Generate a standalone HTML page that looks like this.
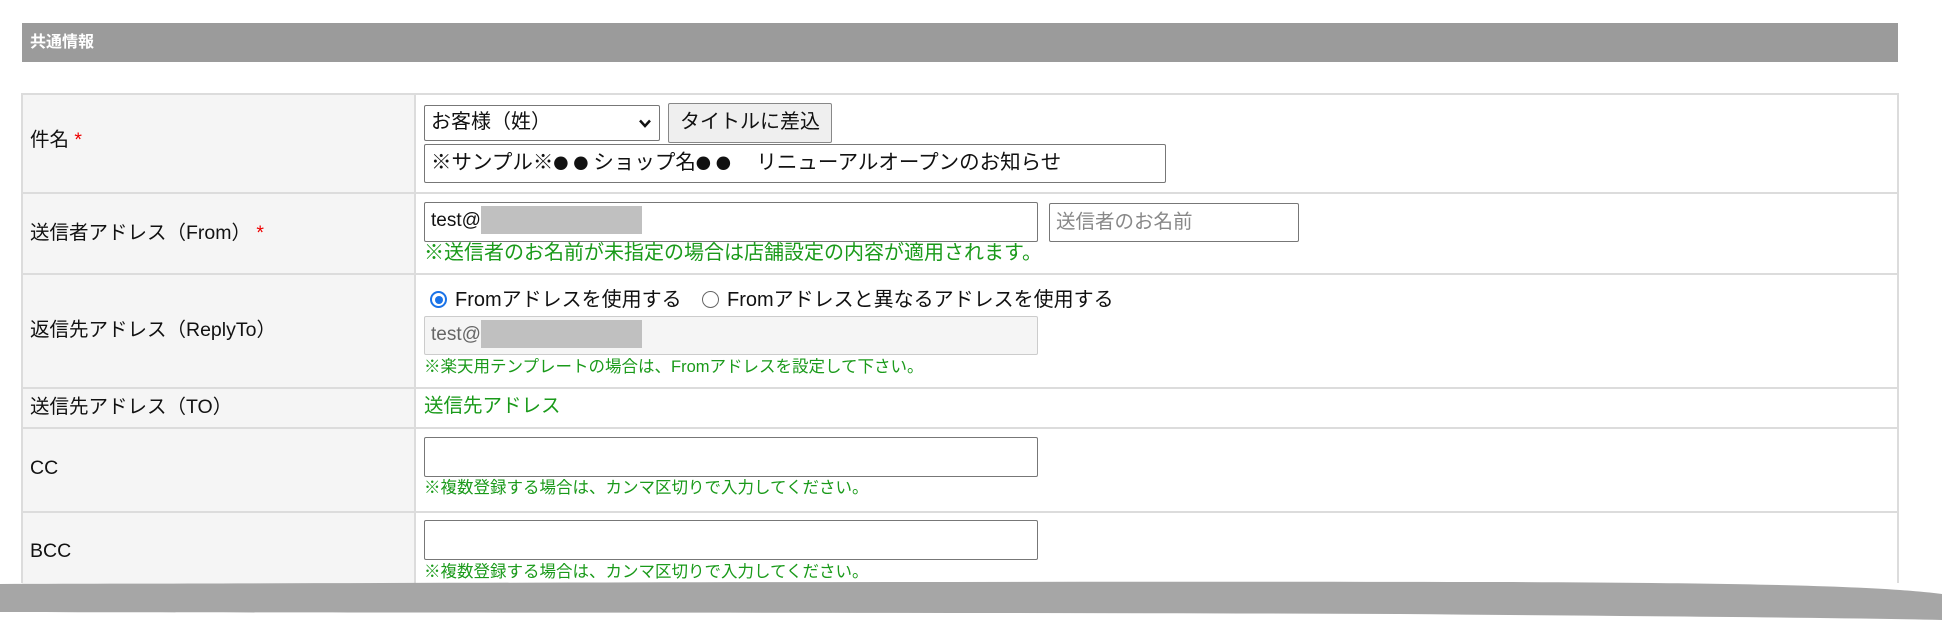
<!DOCTYPE html>
<html><head><meta charset="utf-8"><style>
*{margin:0;padding:0;box-sizing:border-box}
body{width:1942px;height:642px;background:#fff;position:relative;overflow:hidden;font-family:"Liberation Sans","Noto Sans CJK JP",sans-serif;color:#111}
.a{position:absolute;white-space:nowrap}
.hdr{left:22px;top:23px;width:1876px;height:39px;background:#9b9b9b;color:#fff;font-weight:bold;font-size:16px;line-height:39px;padding-left:8px}
.lab{left:22px;width:393px;background:#f5f5f5}
.hl{height:2px;background:#dcdcdc;left:22px;width:1876px}
.vl{width:2px;background:#dcdcdc}
.lt{left:30px;font-size:19.5px;line-height:22px}
.req{color:#e00}
.in{border:1.5px solid #777;border-radius:2px;background:#fff;font-size:19px;line-height:36px;padding-left:6px}
.g{color:#1a9a1a}
.gray{background:#c0c0c0}
.cj{font-family:"Noto Sans CJK JP",sans-serif;font-size:15px;letter-spacing:5px}
</style></head><body>
<div class="a hdr">共通情報</div>
<div class="a lab" style="top:94px;height:490px"></div>
<div class="a hl" style="top:93px"></div>
<div class="a hl" style="top:192px"></div>
<div class="a hl" style="top:273px"></div>
<div class="a hl" style="top:387px"></div>
<div class="a hl" style="top:427px"></div>
<div class="a hl" style="top:511px"></div>
<div class="a vl" style="left:21px;top:93px;height:490px"></div>
<div class="a vl" style="left:414px;top:93px;height:490px"></div>
<div class="a vl" style="left:1897px;top:93px;height:490px"></div>

<div class="a lt" style="top:129px">件名 <span class="req">*</span></div>
<div class="a lt" style="top:222px">送信者アドレス（From） <span class="req">*</span></div>
<div class="a lt" style="top:319px">返信先アドレス（ReplyTo）</div>
<div class="a lt" style="top:396px">送信先アドレス（TO）</div>
<div class="a lt" style="top:457px">CC</div>
<div class="a lt" style="top:540px">BCC</div>

<div class="a in" style="left:424px;top:105px;width:236px;height:36px;line-height:33px;font-size:20px">お客様（姓）<svg style="position:absolute;right:8px;top:13px" width="12" height="9"><path d="M1 1.5 L6 7 L11 1.5" stroke="#111" stroke-width="2.5" fill="none"/></svg></div>
<div class="a" style="left:668px;top:103px;width:164px;height:40px;border:1.5px solid #888;border-radius:2px;background:#efefef;font-size:20px;line-height:37px;text-align:center">タイトルに差込</div>
<div class="a in" style="left:424px;top:144px;width:742px;height:39px;font-size:20.5px">※サンプル※<span class="cj">●●</span>ショップ名<span class="cj">●●</span>　リニューアルオープンのお知らせ</div>

<div class="a in" style="left:424px;top:202px;width:614px;height:40px">test@</div>
<div class="a gray" style="left:481px;top:206px;width:161px;height:28px"></div>
<div class="a in" style="left:1049px;top:203px;width:250px;height:39px;color:#888;font-size:19.5px">送信者のお名前</div>
<div class="a g" style="left:424px;top:242px;font-size:20px;line-height:22px">※送信者のお名前が未指定の場合は店舗設定の内容が適用されます。</div>

<div class="a" style="left:430px;top:291px;width:17px;height:17px;border-radius:50%;border:2px solid #1a73e8"><div style="margin:2.5px;width:8px;height:8px;border-radius:50%;background:#1a73e8"></div></div>
<div class="a" style="left:455px;top:288px;font-size:20px;line-height:24px">Fromアドレスを使用する</div>
<div class="a" style="left:702px;top:291px;width:17px;height:17px;border-radius:50%;border:1.5px solid #666"></div>
<div class="a" style="left:727px;top:288px;font-size:20px;line-height:24px">Fromアドレスと異なるアドレスを使用する</div>
<div class="a in" style="left:424px;top:316px;width:614px;height:39px;background:#f5f5f5;border-color:#ccc;color:#666">test@</div>
<div class="a gray" style="left:481px;top:320px;width:161px;height:28px"></div>
<div class="a g" style="left:424px;top:358px;font-size:16.5px;line-height:19px">※楽天用テンプレートの場合は、Fromアドレスを設定して下さい。</div>

<div class="a g" style="left:424px;top:395px;font-size:19.5px;line-height:22px">送信先アドレス</div>

<div class="a in" style="left:424px;top:437px;width:614px;height:40px"></div>
<div class="a g" style="left:424px;top:479px;font-size:16.5px;line-height:19px">※複数登録する場合は、カンマ区切りで入力してください。</div>
<div class="a in" style="left:424px;top:520px;width:614px;height:40px"></div>
<div class="a g" style="left:424px;top:563px;font-size:16.5px;line-height:19px">※複数登録する場合は、カンマ区切りで入力してください。</div>

<svg class="a" style="left:0;top:0" width="1942" height="642">
<path d="M0 584 C400 583 1000 581 1500 582 C1750 583 1880 586 1942 594 L1942 620 C1800 617 1600 616 1400 614 C900 612 300 613 0 612 Z" fill="#a6a6a6"/>
</svg>
</body></html>
